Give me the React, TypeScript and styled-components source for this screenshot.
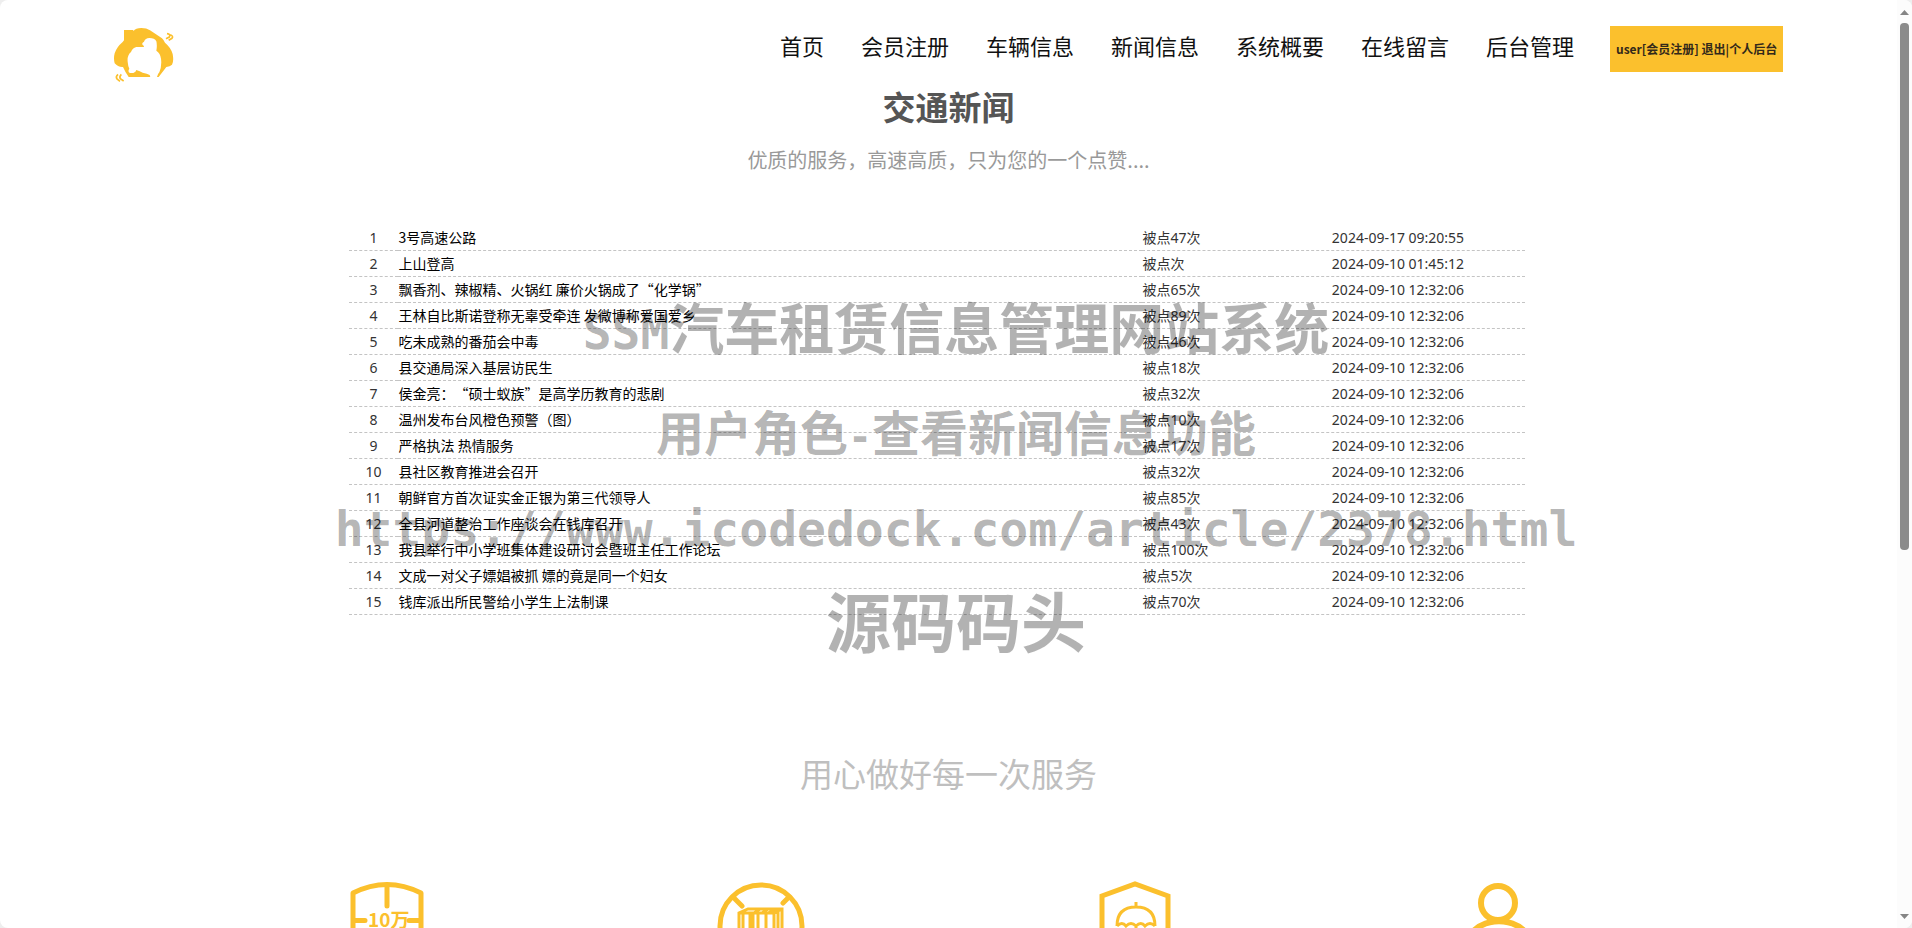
import React from 'react';
import styled, { createGlobalStyle } from 'styled-components';

const GOLD = '#fbc02d';
const UI_FONT = '"Noto Sans", "Noto Sans CJK SC", sans-serif';
const CJK_FONT = '"Noto Sans CJK SC", "Noto Sans", sans-serif';

const GlobalStyle = createGlobalStyle`
  *, *::before, *::after { box-sizing: border-box; }
  body { margin: 0; background: #eeeeee; font-family: ${UI_FONT}; color: #333; text-spacing-trim: space-all; }
  a { color: inherit; text-decoration: none; }
  h1, h2, p, ul { margin: 0; padding: 0; }
`;

const Window = styled.div`
  position: relative;
  display: flex;
  height: 100vh;
  overflow: hidden;
  border-radius: 8px;
  background: #fff;
`;

const Page = styled.div`
  flex: 1;
  min-width: 0;
`;

const Header = styled.header`
  display: flex;
  align-items: flex-start;
  gap: 36px;
  height: 84px;
  padding: 26px 6% 0;
`;

const LogoLink = styled.a`
  display: block;
  margin-right: auto;
  padding-top: 2px;
  line-height: 0;
`;

const Nav = styled.nav`
  display: flex;
  gap: 37px;
  font-family: ${CJK_FONT};
  font-size: 22px;
  line-height: 38px;
  color: #111;
`;

const UserBox = styled.div`
  padding: 0 6px;
  background: ${GOLD};
  color: #33291a;
  font-family: ${CJK_FONT};
  font-size: 12px;
  font-weight: 700;
  line-height: 46px;
  white-space: nowrap;
`;

const Title = styled.h1`
  color: #555;
  font-family: ${CJK_FONT};
  font-size: 33px;
  line-height: 44px;
  text-align: center;
`;

const Subtitle = styled.p`
  color: #999;
  font-family: ${CJK_FONT};
  font-size: 20px;
  line-height: 64px;
  text-align: center;
`;

const Container = styled.main`
  max-width: 1200px;
  margin: 33px auto 0;
`;

const NewsTable = styled.table`
  width: 98%;
  table-layout: fixed;
  border-spacing: 0;
  font-size: 14px;
  line-height: 25px;
`;

const Cell = styled.td<{ $center?: boolean }>`
  height: 26px;
  padding: 0 0 0 1px;
  border-bottom: 1px dashed #c4c4c4;
  text-align: ${(p) => (p.$center ? 'center' : 'left')};
  white-space: nowrap;
`;

const NewsLink = styled.a`
  color: #000;
  font-family: ${CJK_FONT};
`;

const Slogan = styled.h2`
  margin-top: 128px;
  color: #bfbfbf;
  font-family: ${CJK_FONT};
  font-size: 33px;
  font-weight: 400;
  line-height: 60px;
  text-align: center;
`;

const Features = styled.ul`
  display: grid;
  grid-template-columns: repeat(4, 1fr);
  width: 79%;
  margin: 77px auto 0;
  list-style: none;
`;

const Feature = styled.li`
  display: flex;
  justify-content: center;
`;

const Watermark = styled.div`
  position: absolute;
  top: 273px;
  left: 0;
  right: 0;
  color: rgba(0, 0, 0, 0.3);
  font-family: ${CJK_FONT};
  font-weight: 700;
  text-align: center;
  white-space: nowrap;
  pointer-events: none;
`;

const MarkLine = styled.div<{ $size: number; $height: number }>`
  font-size: ${(p) => p.$size}px;
  line-height: ${(p) => p.$height}px;
`;

const Mono = styled.span<{ $size: number }>`
  font-family: "DejaVu Sans Mono", "Liberation Mono", monospace;
  font-size: ${(p) => p.$size}px;
  line-height: 1;
`;

const ScrollTrack = styled.div`
  display: flex;
  flex-direction: column;
  align-items: center;
  width: 15px;
  padding: 10px 0 9px;
  background: #fcfcfc;
`;

const ScrollThumb = styled.div`
  width: 9px;
  height: 58%;
  margin: 8px 0 auto;
  border-radius: 4px;
  background: #8b8b8b;
`;

const menu = ['首页', '会员注册', '车辆信息', '新闻信息', '系统概要', '在线留言', '后台管理'];

const news: [string, string, string][] = [
  ['3号高速公路', '47', '2024-09-17 09:20:55'],
  ['上山登高', '', '2024-09-10 01:45:12'],
  ['飘香剂、辣椒精、火锅红 廉价火锅成了“化学锅”', '65', '2024-09-10 12:32:06'],
  ['王林自比斯诺登称无辜受牵连 发微博称爱国爱乡', '89', '2024-09-10 12:32:06'],
  ['吃未成熟的番茄会中毒', '46', '2024-09-10 12:32:06'],
  ['县交通局深入基层访民生', '18', '2024-09-10 12:32:06'],
  ['侯金亮：“硕士蚁族”是高学历教育的悲剧', '32', '2024-09-10 12:32:06'],
  ['温州发布台风橙色预警（图）', '10', '2024-09-10 12:32:06'],
  ['严格执法 热情服务', '17', '2024-09-10 12:32:06'],
  ['县社区教育推进会召开', '32', '2024-09-10 12:32:06'],
  ['朝鲜官方首次证实金正银为第三代领导人', '85', '2024-09-10 12:32:06'],
  ['全县河道整治工作座谈会在钱库召开', '43', '2024-09-10 12:32:06'],
  ['我县举行中小学班集体建设研讨会暨班主任工作论坛', '100', '2024-09-10 12:32:06'],
  ['文成一对父子嫖娼被抓 嫖的竟是同一个妇女', '5', '2024-09-10 12:32:06'],
  ['钱库派出所民警给小学生上法制课', '70', '2024-09-10 12:32:06'],
];

const Logo = () => (
  <svg width="60" height="55" viewBox="72 54 180 165" role="img" aria-label="logo">
    <path
      fill={GOLD}
      d="M102 60H130V64Q137 54 154 54Q170 54 180 61L216 85Q222 91 225 98Q243 113 248 132Q252 154 246 164Q240 170 229 171L206 201H201Q202 193 208 187Q216 168 213 146Q211 130 199 122Q202 106 199 94Q194 84 178 84Q166 84 162 95Q154 99 158 105Q164 108 161 111H139Q127 114 123 126Q111 136 113 155Q114 168 118 176Q112 186 120 189H130Q138 186 139 180Q150 183 158 188Q172 191 179 195L181 201H116Q104 183 99 171Q84 172 74 160Q70 145 74 130Q80 111 98 96L102 91Z"
    />
    <path
      fill="none"
      stroke={GOLD}
      strokeWidth="5"
      d="M231 71Q243 73 238 81L228 86M241 74Q251 78 246 85L236 91M84 193Q76 200 81 207L90 214M94 193Q87 200 91 206L101 213"
    />
  </svg>
);

const MileageIcon = () => (
  <svg width="88" height="88" viewBox="0 0 88 88" fill="none" stroke={GOLD} strokeWidth="5" aria-hidden="true">
    <path d="M10 13Q44-4 78 13V68Q44 96 10 68Z" strokeLinejoin="round" />
    <path d="M44 5V26M12 40.500H22M66 40.500H76" strokeLinecap="round" />
    <text x="25" y="47" fill={GOLD} stroke="none" fontSize="19" fontWeight="700" fontFamily="Noto Sans CJK SC">
      10万
    </text>
  </svg>
);

const ContainerIcon = () => (
  <svg width="88" height="88" viewBox="0 0 88 88" fill="none" stroke={GOLD} strokeWidth="5" aria-hidden="true">
    <circle cx="44" cy="46" r="41" />
    <path d="M17 18L25 26M72 17L66 23" strokeLinecap="round" />
    <path
      strokeWidth="3"
      d="M22 66V33L31 29H65V66M22 33H57L65 29M26 34V66M33 33V66M36 33V66M41 34V66M49 34V66M57 33V66M61 31V66M37 33L43 29M45 33L51 29M51 33L59 29"
    />
  </svg>
);

const InsuranceIcon = () => (
  <svg width="88" height="88" viewBox="0 0 88 88" fill="none" stroke={GOLD} aria-hidden="true">
    <path strokeWidth="5" d="M10 66V16L43 4L76 16V66L43 84Z" />
    <path
      strokeWidth="3"
      d="M25 46Q25 27 44 27Q63 27 63 46M44 27V22M25 46Q30 41 34 46Q39 41 44 46Q49 41 53 46Q58 41 63 46M44 46V62Q44 67 38 66"
    />
  </svg>
);

const PersonIcon = () => (
  <svg width="88" height="88" viewBox="0 0 88 88" fill="none" stroke={GOLD} strokeWidth="6" aria-hidden="true">
    <circle cx="32" cy="23" r="17" />
    <path d="M3 88V56A38 38 0 0 1 63 56V88" />
  </svg>
);

const ScrollArrow = ({ down }: { down?: boolean }) => (
  <svg width="9" height="5" viewBox="0 0 9 5" aria-hidden="true">
    <path fill="#858585" d={down ? 'M0 0H9L4.500 5Z' : 'M0 5H9L4.500 0Z'} />
  </svg>
);

export default function App() {
  return (
    <Window>
      <GlobalStyle />
      <Page>
        <Header>
          <LogoLink href="#">
            <Logo />
          </LogoLink>
          <Nav>
            {menu.map((label) => (
              <a href="#" key={label}>{label}</a>
            ))}
          </Nav>
          <UserBox>
            user[会员注册] <a href="#">退出</a>|<a href="#">个人后台</a>
          </UserBox>
        </Header>
        <Title>交通新闻</Title>
        <Subtitle>优质的服务，高速高质，只为您的一个点赞....</Subtitle>
        <Container>
          <NewsTable>
            <colgroup>
              <col width="49" />
              <col />
              <col width="129" />
              <col width="254" />
            </colgroup>
            <tbody>
              {news.map(([title, likes, date], i) => (
                <tr key={title}>
                  <Cell $center>{i + 1}</Cell>
                  <Cell><NewsLink href="#">{title}</NewsLink></Cell>
                  <Cell>{`被点${likes}次`}</Cell>
                  <Cell $center>{date}</Cell>
                </tr>
              ))}
            </tbody>
          </NewsTable>
        </Container>
        <Slogan>用心做好每一次服务</Slogan>
        <Features>
          <Feature><MileageIcon /></Feature>
          <Feature><ContainerIcon /></Feature>
          <Feature><InsuranceIcon /></Feature>
          <Feature><PersonIcon /></Feature>
        </Features>
      </Page>
      <ScrollTrack aria-hidden="true">
        <ScrollArrow />
        <ScrollThumb />
        <ScrollArrow down />
      </ScrollTrack>
      <Watermark>
        <MarkLine $size={55} $height={104}><Mono $size={48}>SSM</Mono>汽车租赁信息管理网站系统</MarkLine>
        <MarkLine $size={48} $height={106}>用户角色<Mono $size={40}>-</Mono>查看新闻信息功能</MarkLine>
        <MarkLine $size={48} $height={84}><Mono $size={48}>https://www.icodedock.com/article/2378.html</Mono></MarkLine>
        <MarkLine $size={65} $height={104}>源码码头</MarkLine>
      </Watermark>
    </Window>
  );
}
